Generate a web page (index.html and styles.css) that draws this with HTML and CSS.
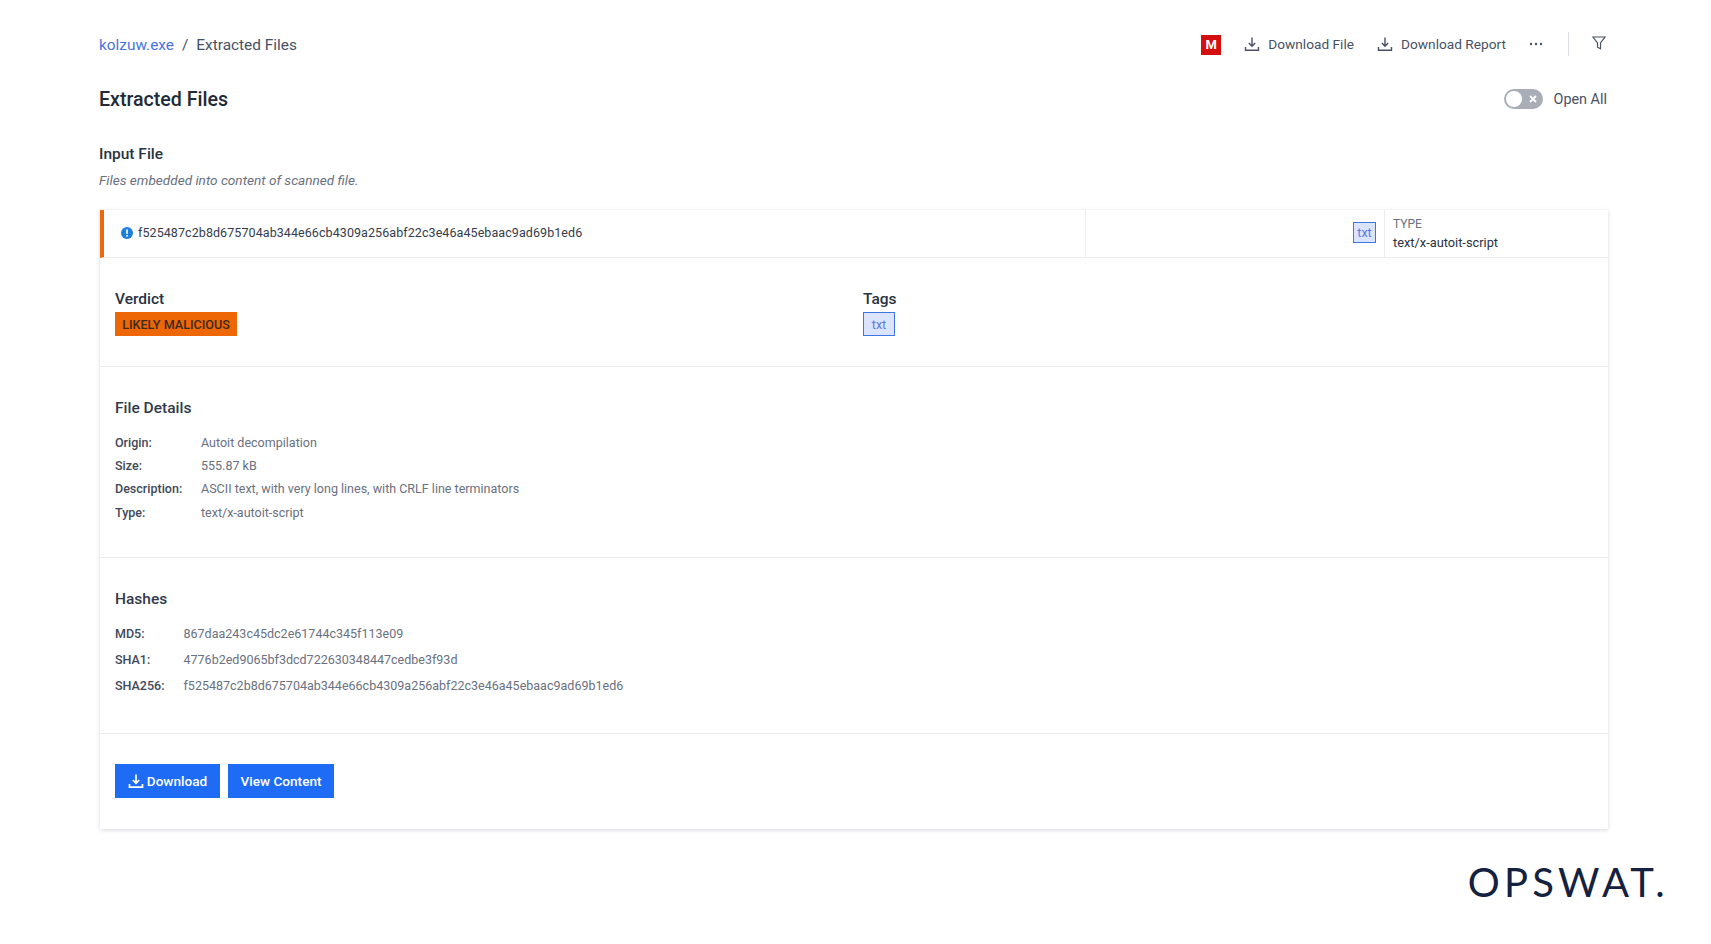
FILE: index.html
```html
<!DOCTYPE html>
<html lang="en">
<head>
<meta charset="utf-8">
<title>Extracted Files</title>
<link rel="stylesheet" href="styles.css">
</head>
<body>
<main class="page">
  <header class="topbar">
    <nav class="crumbs"><a class="crumb-link">kolzuw.exe</a><span class="crumb-sep">/</span><span>Extracted Files</span></nav>
    <div class="actions">
      <span class="m-badge">M</span>
      <span class="action"><svg class="ico" viewBox="0 0 16 16"><path d="M8 1.5v8.5M4.8 7l3.2 3.2L11.2 7M1.5 11v3.2h13V11"/></svg>Download File</span>
      <span class="action"><svg class="ico" viewBox="0 0 16 16"><path d="M8 1.5v8.5M4.8 7l3.2 3.2L11.2 7M1.5 11v3.2h13V11"/></svg>Download Report</span>
      <svg class="dots" viewBox="0 0 14 4"><circle cx="2" cy="2" r="1.2"/><circle cx="7" cy="2" r="1.2"/><circle cx="12" cy="2" r="1.2"/></svg>
      <span class="vsep"></span>
      <svg class="funnel" viewBox="0 0 14 14"><path d="M1 1h12L8.5 7v5.8l-3-1.6V7z"/></svg>
    </div>
  </header>

  <section class="title-row">
    <h1 class="page-title">Extracted Files</h1>
    <div class="open-all">
      <span class="toggle"><span class="knob"></span><svg class="toggle-x" viewBox="0 0 8 8"><path d="M1 1l6 6M7 1L1 7"/></svg></span>
      <span>Open All</span>
    </div>
  </section>

  <h2 class="input-title">Input File</h2>
  <p class="input-sub">Files embedded into content of scanned file.</p>

  <article class="card">
    <div class="card-head">
      <div class="head-hash">
        <svg class="info" viewBox="0 0 12 12"><circle cx="6" cy="6" r="6"/><rect x="5.2" y="2.4" width="1.6" height="4.6" fill="#fff"/><rect x="5.2" y="8" width="1.6" height="1.6" fill="#fff"/></svg>
        <span>f525487c2b8d675704ab344e66cb4309a256abf22c3e46a45ebaac9ad69b1ed6</span>
      </div>
      <div class="head-tag"><span class="tag tag-small">txt</span></div>
      <div class="head-type">
        <span class="type-label">TYPE</span>
        <span class="type-value">text/x-autoit-script</span>
      </div>
    </div>

    <div class="section verdict-row">
      <div class="verdict-col">
        <h3 class="label-title">Verdict</h3>
        <span class="verdict">LIKELY MALICIOUS</span>
      </div>
      <div class="tags-col">
        <h3 class="label-title">Tags</h3>
        <span class="tag tag-big">txt</span>
      </div>
    </div>

    <div class="section details">
      <h3 class="section-title">File Details</h3>
      <dl class="kv kv-details">
        <dt>Origin:</dt><dd>Autoit decompilation</dd>
        <dt>Size:</dt><dd>555.87 kB</dd>
        <dt>Description:</dt><dd>ASCII text, with very long lines, with CRLF line terminators</dd>
        <dt>Type:</dt><dd>text/x-autoit-script</dd>
      </dl>
    </div>

    <div class="section hashes">
      <h3 class="section-title">Hashes</h3>
      <dl class="kv kv-hashes">
        <dt>MD5:</dt><dd>867daa243c45dc2e61744c345f113e09</dd>
        <dt>SHA1:</dt><dd>4776b2ed9065bf3dcd722630348447cedbe3f93d</dd>
        <dt>SHA256:</dt><dd>f525487c2b8d675704ab344e66cb4309a256abf22c3e46a45ebaac9ad69b1ed6</dd>
      </dl>
    </div>

    <div class="buttons">
      <button class="btn btn-download"><svg class="ico ico-white" viewBox="0 0 16 16"><path d="M8 1.5v8.5M4.8 7l3.2 3.2L11.2 7M1.5 11v3.2h13V11"/></svg>Download</button>
      <button class="btn btn-view">View Content</button>
    </div>
  </article>

  <footer class="brand"><span class="logo">OPSWAT.</span></footer>
</main>
</body>
</html>
```
FILE: styles.css
```css
* { box-sizing: border-box; }
html, body { margin: 0; background: #fff; }
body { font-family: Roboto, "Liberation Sans", sans-serif; color: #2b3241; height: 944px; overflow: hidden; }
.page { width: 1711px; padding: 0 103px 0 100px; }

.topbar { height: 88px; padding-top: 2px; display: flex; align-items: center; justify-content: space-between; }
.crumbs { font-size: 15.4px; color: #485164; display: flex; align-items: center; margin-left: -1px; }
.crumb-link { color: #4a72e0; }
.crumb-sep { margin: 0 8px; }
.actions { display: flex; align-items: center; font-size: 13.7px; color: #485164; margin-bottom: 2px; }
.m-badge { width: 20px; height: 20px; background: #d40f0f; color: #fff; font-size: 13px; font-weight: 700; display: flex; align-items: center; justify-content: center; margin: 1px 23px 0 0; }
.action { display: flex; align-items: center; gap: 8px; margin-right: 23px; }
.ico { width: 16px; height: 16px; fill: none; stroke: #485164; stroke-width: 1.4; }
.ico-white { stroke: #fff; stroke-width: 1.7; }
.dots { width: 14px; height: 4px; fill: #485164; margin-right: 25px; }
.vsep { width: 1px; height: 24px; background: #d9dce1; margin-right: 23px; }
.funnel { width: 14px; height: 14px; fill: none; stroke: #485164; stroke-width: 1.2; margin-right: 2px; margin-bottom: 2px; }

.title-row { display: flex; align-items: center; justify-content: space-between; height: 22px; }
.page-title { margin: 1px 0 0 -1px; font-size: 19.6px; font-weight: 500; color: #222938; line-height: 22px; }
.open-all { display: flex; align-items: center; gap: 10px; font-size: 14.4px; color: #485164; padding-right: 1px; }
.toggle { width: 39px; height: 20px; border-radius: 10px; background: #a9adb7; display: flex; align-items: center; justify-content: space-between; padding: 0 6px 0 2px; }
.knob { width: 16px; height: 16px; border-radius: 50%; background: #fff; }
.toggle-x { width: 8px; height: 8px; stroke: #fff; stroke-width: 1.8; fill: none; }

.input-title { margin: 33px 0 0 -1px; font-size: 15.5px; font-weight: 500; line-height: 22px; color: #2b3241; }
.input-sub { margin: 5px 0 0 -1px; font-size: 13.6px; font-style: italic; line-height: 20px; color: #6a7180; }

.card { margin-top: 20px; height: 619px; background: #fff; box-shadow: 0 1px 4px rgba(50, 60, 90, .2); display: flex; flex-direction: column; }
.card-head { height: 48px; display: flex; border-bottom: 1px solid #ebecef; border-left: 4px solid #e9690c; font-size: 12.5px; }
.head-hash { width: 982px; display: flex; align-items: center; gap: 5px; padding: 0 0 2px 17px; border-right: 1px solid #ebecef; letter-spacing: .08px; color: #353c4c; }
.info { width: 12px; height: 12px; fill: #1d7fdc; flex: none; }
.head-tag { flex: 1; display: flex; align-items: center; justify-content: flex-end; padding: 0 8px 2px 0; border-right: 1px solid #ebecef; }
.head-type { width: 223px; padding: 5px 8px; display: flex; flex-direction: column; }
.type-label { font-size: 12px; line-height: 18px; color: #6a7180; }
.type-value { font-size: 12.8px; line-height: 20px; color: #2b3241; }

.tag { display: inline-flex; align-items: center; justify-content: center; background: #dae4ff; border: 1px solid #3f76e6; color: #5a7ae0; font-size: 12.5px; }
.tag-small { width: 23px; height: 21px; }
.tag-big { width: 32px; height: 24px; }

.section { padding: 0 15px; border-bottom: 1px solid #ebecef; flex: none; }
.verdict-row { height: 109px; padding-top: 31px; display: flex; }
.verdict-col { width: 748px; }
.label-title { margin: 0; font-size: 15.5px; font-weight: 500; line-height: 20px; color: #2b3241; }
.verdict { display: inline-flex; align-items: center; justify-content: center; width: 122px; height: 24px; margin-top: 3px; background: #ed6706; color: #3d2a20; font-size: 12.6px; font-weight: 500; }
.tags-col .tag { margin-top: 3px; }

.section-title { margin: 0; font-size: 15.5px; font-weight: 500; line-height: 22px; color: #323a4a; }
.details { height: 191px; padding-top: 30px; }
.kv { margin: 0; display: grid; font-size: 12.52px; color: #6a7180; }
.kv dt { font-weight: 500; color: #414959; }
.kv dd { margin: 0; }
.kv-details { grid-template-columns: 86px 1fr; grid-auto-rows: 23.2px; margin-top: 12px; line-height: 23px; }
.hashes { height: 176px; padding-top: 30px; }
.kv-hashes { grid-template-columns: 68.5px 1fr; grid-auto-rows: 26.2px; margin-top: 11px; line-height: 26px; }

.buttons { padding: 30px 15px 0; display: flex; gap: 8px; }
.btn { height: 34px; border: 0; background: #1e6bf5; color: #fff; font: 500 13.6px Roboto, "Liberation Sans", sans-serif; display: inline-flex; align-items: center; justify-content: center; padding: 0; }
.btn-download { width: 105px; gap: 3px; }
.btn-view { width: 106px; margin-right: 0; }

.brand { display: flex; justify-content: flex-end; margin: 33px -61px 0 0; }
.logo { font-family: Lato, sans-serif; font-weight: 400; font-size: 40px; line-height: 40px; letter-spacing: 4.2px; color: #14213f; }
```
